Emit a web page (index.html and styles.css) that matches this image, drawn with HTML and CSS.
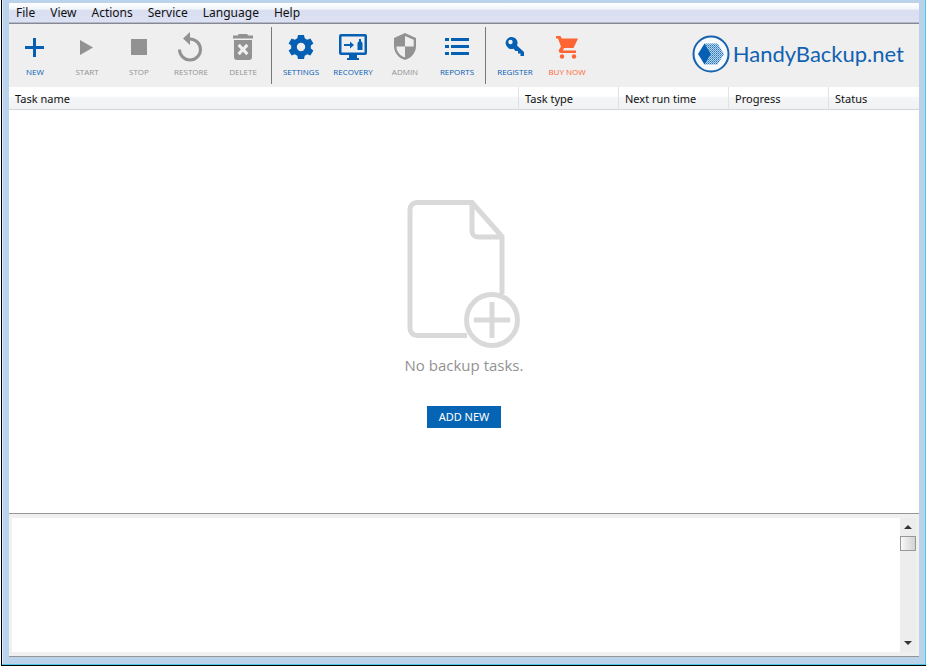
FILE: index.html
```html
<!DOCTYPE html>
<html lang="en">
<head>
<meta charset="utf-8">
<title>Handy Backup</title>
<link rel="stylesheet" href="styles.css">
</head>
<body>
<div class="window">
  <div class="content">
    <nav class="menu" aria-label="Main menu">
      <button type="button">File</button>
      <button type="button">View</button>
      <button type="button">Actions</button>
      <button type="button">Service</button>
      <button type="button">Language</button>
      <button type="button">Help</button>
    </nav>
    <header class="toolbar">
      <div class="group">
        <button type="button" class="tool">
          <svg viewBox="0 0 32 32"><path d="M14 7h3v8h8v3h-8v8h-3v-8H6v-3h8z"/></svg>
          <span>NEW</span>
        </button>
        <button type="button" class="tool off">
          <svg viewBox="0 0 32 32"><path d="M9 9l13 7.500-13 7.500z"/></svg>
          <span>START</span>
        </button>
        <button type="button" class="tool off">
          <svg viewBox="0 0 32 32"><path d="M8 8h16v16H8z"/></svg>
          <span>STOP</span>
        </button>
        <button type="button" class="tool off">
          <svg viewBox="0 0 32 32"><path d="M15 1v5.500a12 12 0 1 1-12 12h3a9 9 0 1 0 9-9V14L8 7.500z"/></svg>
          <span>RESTORE</span>
        </button>
        <button type="button" class="tool off">
          <svg viewBox="0 0 32 32"><path fill-rule="evenodd" d="M12 3h8l1.500 1.500H26v3H6v-3h4.500zM7 9h18v17a3 3 0 0 1-3 3H10a3 3 0 0 1-3-3zm3.500 6l3.300 3.500-3.300 3.500 2.300 2.300 3.200-3.500 3.200 3.500 2.300-2.300-3.300-3.500 3.300-3.500-2.300-2.300-3.200 3.500-3.200-3.500z"/></svg>
          <span>DELETE</span>
        </button>
      </div>
      <div class="group">
        <button type="button" class="tool">
          <svg viewBox="0 0 32 32"><path fill-rule="evenodd" d="M13 4h6l.7 3.300 2.500 1.400 3.200-1.200 3 5-2.600 2.100v2.800l2.600 2.100-3 5-3.200-1.200-2.500 1.400L19 28h-6l-.7-3.300-2.500-1.400-3.200 1.200-3-5 2.600-2.100v-2.800l-2.600-2.100 3-5 3.200 1.200 2.500-1.400zM16 11.800a4.200 4.200 0 1 0 0 8.400 4.200 4.200 0 0 0 0-8.400z"/></svg>
          <span>SETTINGS</span>
        </button>
        <button type="button" class="tool">
          <svg viewBox="0 0 32 32"><path fill-rule="evenodd" d="M4 3h24a2 2 0 0 1 2 2v17a2 2 0 0 1-2 2h-8v3h2v2H10v-2h2v-3H4a2 2 0 0 1-2-2V5a2 2 0 0 1 2-2zm.5 2.500v16h23v-16z"/><path d="M7 13h6v-2.500l4 3.500-4 3.500V15H7zM22 8h2v2l1.500 2v7h-5v-7l1.500-2z"/></svg>
          <span>RECOVERY</span>
        </button>
        <button type="button" class="tool off">
          <svg viewBox="0 0 32 32"><path fill-rule="evenodd" d="M16 2l11 5v8c0 6.500-4.500 12-11 14-6.500-2-11-7.500-11-14V7zm0 3v10.500h8.700V8.700zM7.300 15.500c.3 5.200 3.700 9.300 8.700 11V15.500z"/></svg>
          <span>ADMIN</span>
        </button>
        <button type="button" class="tool">
          <svg viewBox="0 0 32 32"><path d="M4 7h4v3H4zM10 7h18v3H10zM4 14h4v3H4zM10 14h18v3H10zM4 21h4v3H4zM10 21h18v3H10z"/></svg>
          <span>REPORTS</span>
        </button>
      </div>
      <div class="group">
        <button type="button" class="tool">
          <svg viewBox="0 0 32 32"><path fill-rule="evenodd" d="M12.500 6a6 6 0 0 1 5.500 8.500l7 6.500v4h-3.500v-2.500H19V20h-2.500l-2-2.300A6 6 0 1 1 12.500 6zM11.500 8.800a2.200 2.200 0 1 0 0 4.400 2.200 2.200 0 0 0 0-4.400z"/></svg>
          <span>REGISTER</span>
        </button>
        <button type="button" class="tool buy">
          <svg viewBox="0 0 32 32"><path d="M5 5h4.500l1.200 2.500H27L22.500 17H13l-1.200 2.500H25V22H10a2.200 2.200 0 0 1-2-3.200L10 15.500 7 7.500H5z"/><circle cx="11" cy="25.500" r="2.200"/><circle cx="23" cy="25.500" r="2.200"/></svg>
          <span>BUY NOW</span>
        </button>
      </div>
      <a class="brand" href="#">
        <svg viewBox="0 0 38 38">
          <defs><pattern id="dots" width="2" height="2" patternUnits="userSpaceOnUse"><rect width="2" height="2" fill="#b9d5ec"/><rect width="1" height="1" fill="#2474bd"/><rect x="1" y="1" width="1" height="1" fill="#5c9bd1"/></pattern></defs>
          <circle cx="19" cy="19" r="17.500" fill="#f6fafd" stroke="#1763ae" stroke-width="2"/>
          <path d="M12.500 8.500h13L32 19l-6.500 10.500h-13L19 19z" fill="url(#dots)"/>
          <path d="M12.500 8.500L19 19l-6.500 10.500L6 19z" fill="#0560b4"/>
        </svg>
        <span>HandyBackup.net</span>
      </a>
    </header>
    <main class="tasks">
      <table>
        <thead><tr><th class="name">Task name</th><th class="type">Task type</th><th class="next">Next run time</th><th class="type">Progress</th><th class="status">Status</th></tr></thead>
      </table>
      <section class="empty">
        <svg viewBox="0 0 114 150" fill="none" stroke="#d9d9d9" stroke-width="5">
          <path d="M60 136.500H10a7 7 0 0 1-7-7V10.500a7 7 0 0 1 7-7h55l30 34V95M65 4v28a6 6 0 0 0 6 6h24"/>
          <circle cx="85" cy="121" r="25.500"/>
          <path d="M85 103v36M67 121h36"/>
        </svg>
        <p>No backup tasks.</p>
        <button type="button">ADD NEW</button>
      </section>
    </main>
    <section class="log" aria-label="Log">
      <div class="entries"></div>
      <div class="scrollbar">
        <button type="button" aria-label="Scroll up"><svg viewBox="0 0 8 4"><path d="M4 0l4 4H0z"/></svg></button>
        <div class="thumb"></div>
        <button type="button" class="down" aria-label="Scroll down"><svg viewBox="0 0 8 4"><path d="M0 0h8L4 4z"/></svg></button>
      </div>
    </section>
  </div>
</div>
</body>
</html>
```
FILE: styles.css
```css
* { box-sizing: border-box; }

body {
  margin: 0;
  min-height: 100vh;
  display: flex;
  padding: 0 0 5px 1px;
  background: #fff;
  font-family: "Noto Sans", "Open Sans", sans-serif;
  color: #111;
}

button {
  margin: 0;
  padding: 0;
  border: 0;
  background: none;
  color: inherit;
  font: inherit;
}

svg { display: block; }

.window {
  flex: 1;
  display: flex;
  padding: 3px 7px 8px;
  border: solid #000;
  border-width: 0 0 1px 1px;
  background: #bad2ea;
  box-shadow: inset -1px -1px #4cc8e6, inset 1px 0 #d8eef8;
}

.content {
  flex: 1;
  display: flex;
  flex-direction: column;
  background: #f0f0f0;
}

.menu {
  display: flex;
  gap: 15px;
  height: 20px;
  padding: 0 7px;
  background: linear-gradient(#fff 0, #f2f5fb 30%, #d9dff0 40%, #dce2f3 100%);
  border-bottom: 1px solid #b5b8c5;
  font-size: 12px;
  line-height: 20px;
}

.toolbar {
  display: flex;
  height: 64px;
  border-top: 1px solid #858994;
  background: #efefef;
}

.group {
  display: flex;
  margin: 3px 0;
}

.group + .group {
  margin-left: 2px;
  padding-left: 3px;
  border-left: 1px solid #77797c;
}

.tool {
  display: flex;
  flex-direction: column;
  align-items: center;
  gap: 3px;
  width: 52px;
  padding-top: 4px;
  color: #0560b4;
  font-family: "Open Sans", sans-serif;
  font-size: 8px;
  line-height: 12px;
}

.tool svg {
  width: 32px;
  height: 32px;
  fill: currentColor;
}

.off { color: #929292; }
.buy { color: #ff6433; }

.brand {
  display: flex;
  align-items: center;
  gap: 3px;
  margin: 0 15px 3px auto;
  color: #0f62b2;
  font-family: Lato, sans-serif;
  font-size: 22px;
  line-height: 24px;
  text-decoration: none;
}

.brand svg {
  width: 38px;
  height: 38px;
}

.tasks {
  flex: 1;
  display: flex;
  flex-direction: column;
  background: #fff;
}

table {
  width: 100%;
  table-layout: fixed;
  border-collapse: separate;
  border-spacing: 0;
}

th {
  height: 23px;
  padding: 2px 6px 0;
  border-right: 1px solid #e0e2e5;
  border-bottom: 1px solid #d5d5d5;
  background: linear-gradient(#fff 0, #fff 40%, #f4f5f7 50%, #f1f2f4 100%);
  font-size: 11px;
  font-weight: 400;
  line-height: 16px;
  text-align: left;
}

.type { width: 100px; }
.next { width: 110px; }
.status { width: 90px; border-right: 0; }

.empty {
  flex: 1;
  display: flex;
  flex-direction: column;
  align-items: center;
  padding-top: 89px;
}

.empty svg {
  width: 114px;
  height: 150px;
}

.empty p {
  margin: 4px 0 0;
  color: #929292;
  font-family: "Open Sans", sans-serif;
  font-size: 15px;
  line-height: 24px;
}

.empty button {
  margin-top: 29px;
  padding: 0 12px;
  background: #0664b4;
  color: #fff;
  font-size: 11px;
  line-height: 22px;
}

.log {
  display: flex;
  height: 144px;
  padding: 4px 3px;
  border: solid #969696;
  border-width: 1px 0;
}

.entries {
  flex: 1;
  background: #fff;
}

.scrollbar {
  display: flex;
  flex-direction: column;
  width: 16px;
  background: #ededed;
}

.scrollbar button {
  display: grid;
  place-items: center;
  height: 18px;
  fill: #333;
}

.scrollbar svg {
  width: 8px;
  height: 4px;
}

.thumb {
  height: 15px;
  border: 1px solid #989898;
  background: linear-gradient(90deg, #f8f8f8, #d2d2d2);
}

.scrollbar .down { margin-top: auto; }
```
